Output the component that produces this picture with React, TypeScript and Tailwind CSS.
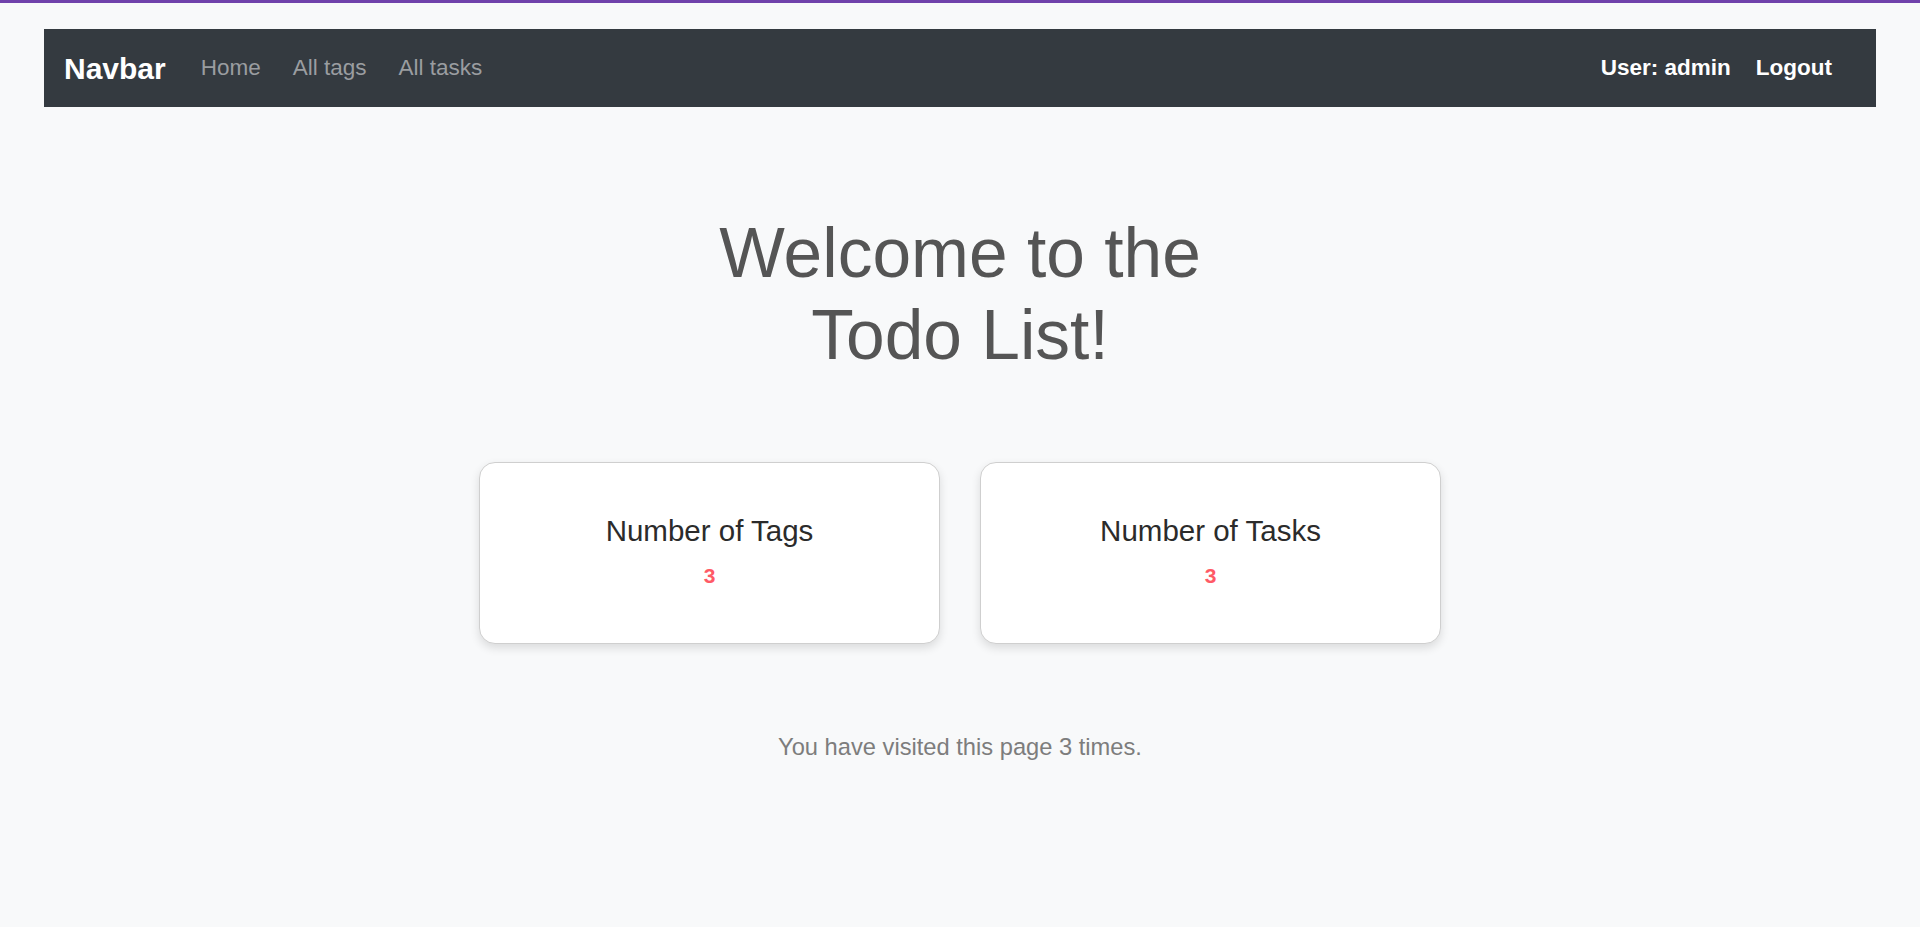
export default function App() {
  return (
    <div className="min-h-[927px] bg-[#f8f9fa] font-['Liberation_Sans',Arial,sans-serif]">
      <div className="h-[3px] bg-[#7042ab]" />

      <nav className="mx-[44px] mt-[26px] flex h-[78px] items-center bg-[#343a40] pl-[20px] pr-[44px]">
        <a href="#" className="mr-[19px] text-[30px] font-bold text-white">
          Navbar
        </a>
        <ul className="flex items-center">
          {["Home", "All tags", "All tasks"].map((l) => (
            <li key={l}>
              <a href="#" className="block px-[16px] text-[22.5px] text-[#9a9da0]">
                {l}
              </a>
            </li>
          ))}
        </ul>
        <div className="ml-auto flex items-center gap-[25px] text-[22.5px] font-bold text-white">
          <span>User: admin</span>
          <a href="#">Logout</a>
        </div>
      </nav>

      <main className="flex flex-col items-center">
        <h1 className="mt-[105px] max-w-[560px] text-center text-[69.5px] leading-[82px] text-[#555555]">
          Welcome to the Todo List!
        </h1>

        <div className="mt-[86px] flex gap-[40px]">
          <StatCard title="Number of Tags" value={3} />
          <StatCard title="Number of Tasks" value={3} />
        </div>

        <p className="mt-[86px] text-[23.7px] text-[#7d7d7d]">
          You have visited this page 3 times.
        </p>
      </main>
    </div>
  );
}

function StatCard({ title, value }: { title: string; value: number }) {
  return (
    <div className="flex h-[182px] w-[461px] flex-col items-center rounded-[16px] border border-[#cfcfcf] bg-white pt-[50px] shadow-[0_4px_10px_rgba(0,0,0,0.12)]">
      <h2 className="text-[29.5px] leading-[35px] text-[#2b2b2b]">{title}</h2>
      <p className="mt-[15px] text-[21px] leading-[25px] font-bold text-[#ff5a66]">{value}</p>
    </div>
  );
}
